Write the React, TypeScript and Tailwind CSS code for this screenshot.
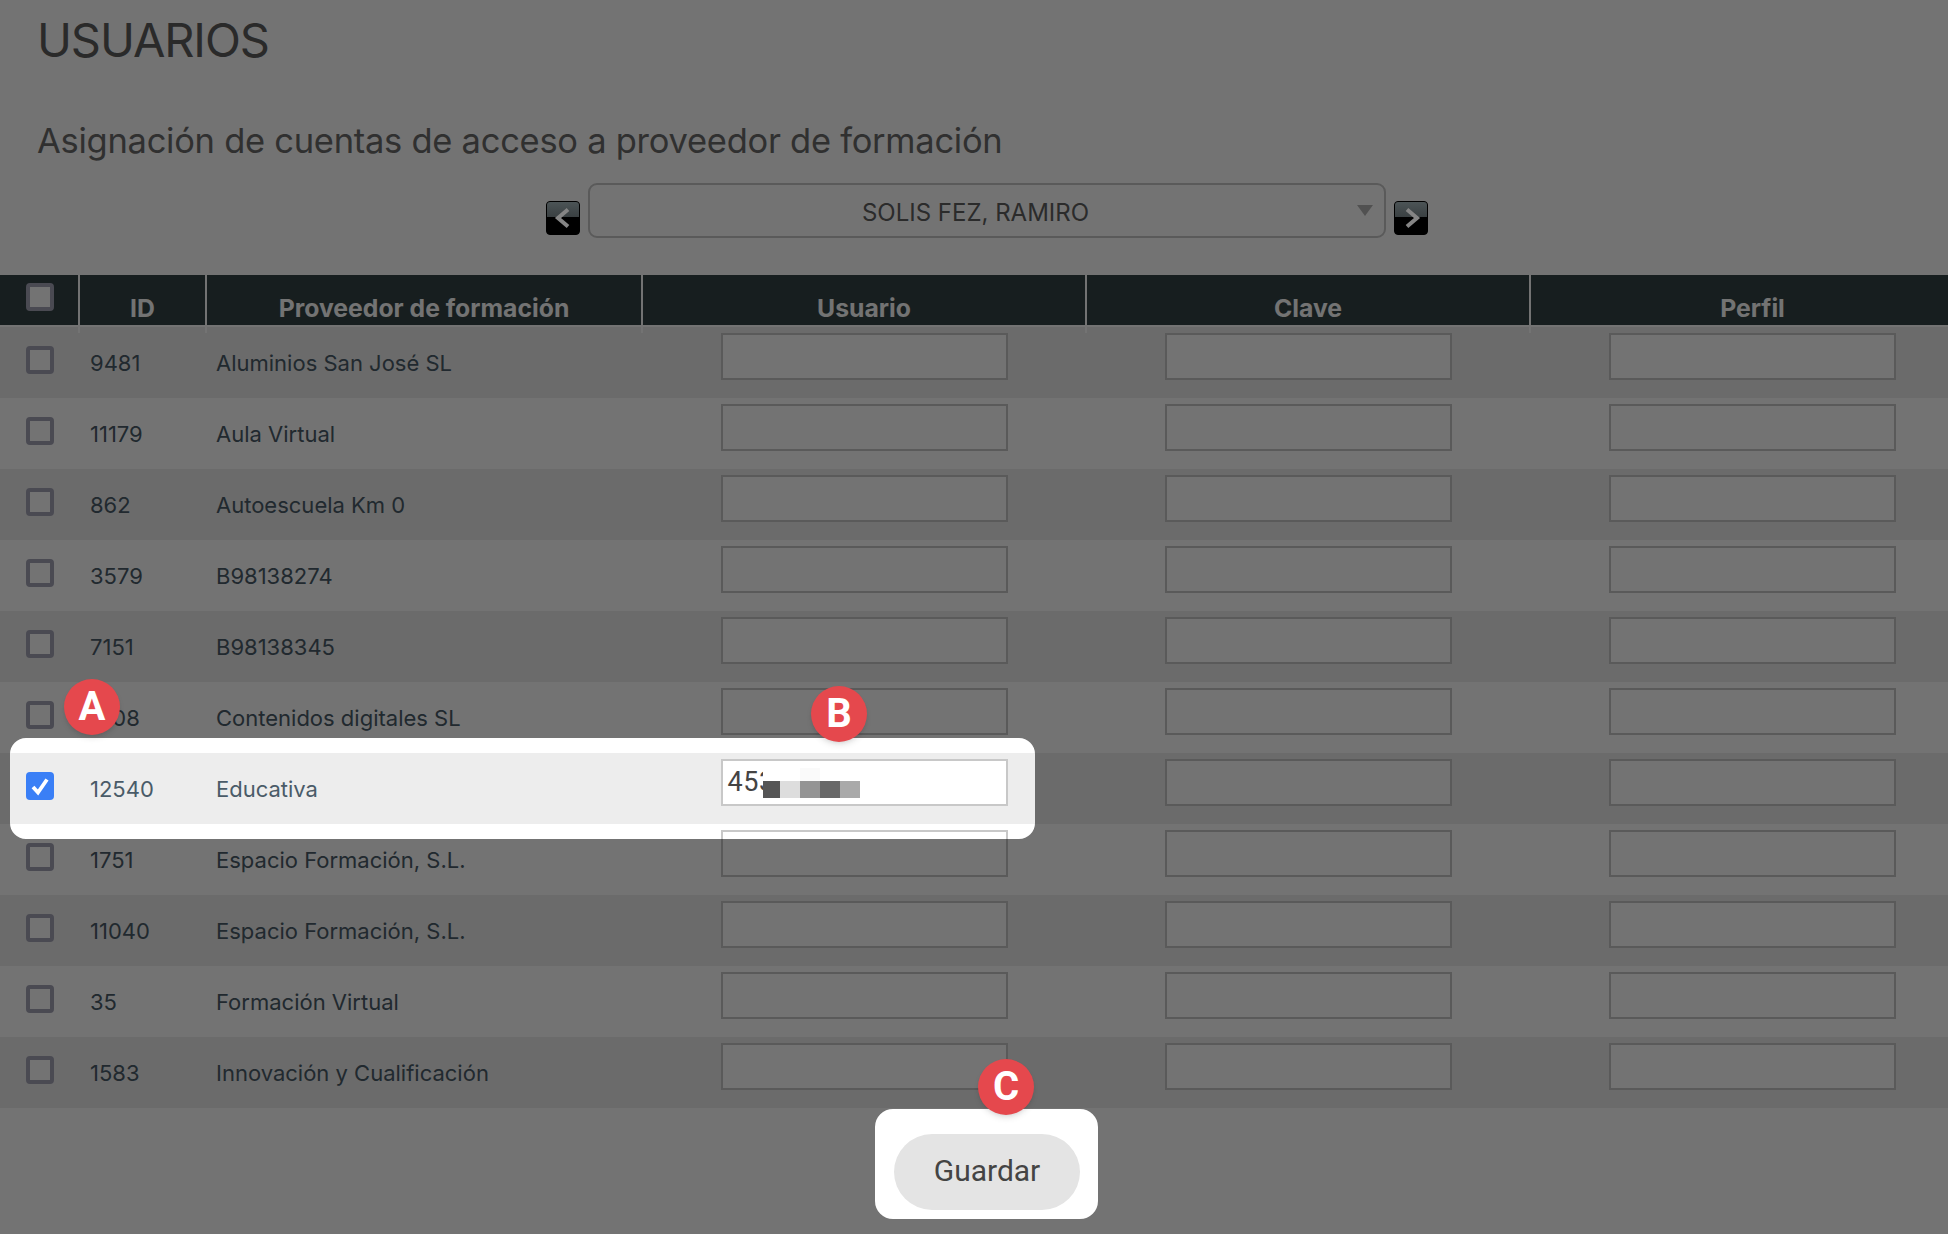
const rows: [string, string][] = [
  ["9481", "Aluminios San José SL"],
  ["11179", "Aula Virtual"],
  ["862", "Autoescuela Km 0"],
  ["3579", "B98138274"],
  ["7151", "B98138345"],
  ["5108", "Contenidos digitales SL"],
  ["12540", "Educativa"],
  ["1751", "Espacio Formación, S.L."],
  ["11040", "Espacio Formación, S.L."],
  ["35", "Formación Virtual"],
  ["1583", "Innovación y Cualificación"],
];

function Arrow({ dir }: { dir: "l" | "r" }) {
  return (
    <div className="relative z-10 w-[34px] h-[34px] rounded-[4px] overflow-hidden flex flex-col bg-black mb-[3px] border-[1.5px] border-black">
      <div className="h-[15px] bg-gradient-to-b from-[#4c5456] to-[#3a4042]" />
      <svg viewBox="0 0 34 34" className="absolute -inset-[1.5px] w-[34px] h-[34px]">
        <path
          d={dir === "l" ? "M22 8.5 L12 17 L22 25.5" : "M13 8.5 L23 17 L13 25.5"}
          fill="none"
          stroke="#858585"
          strokeWidth="4"
        />
      </svg>
    </div>
  );
}

function Badge({ letter, className }: { letter: string; className: string }) {
  return (
    <div
      className={`absolute w-[56px] h-[56px] rounded-full bg-[#e5484d] text-white flex items-center justify-center text-[40px] font-bold font-['Roboto',sans-serif] shadow-md ${className}`}
    >
      {letter}
    </div>
  );
}

export default function App() {
  return (
    <div className="relative w-[1948px] h-[1234px] overflow-hidden bg-white font-['Inter',sans-serif]">
      <h1 className="pt-[14px] pl-[37px] h-[119px] text-[47px] leading-[52px] font-normal text-[#5e5e5e] tracking-[-1.1px]">
        USUARIOS
      </h1>
      <h2 className="pl-[37px] h-[64px] text-[34.5px] leading-[44px] font-normal text-[#6c6c6c] tracking-[-0.27px]">
        Asignación de cuentas de acceso a proveedor de formación
      </h2>

      <div className="flex justify-center items-end gap-2 pl-[26px] h-[55px]">
        <Arrow dir="l" />
        <div className="w-[798px] h-[55px] border-2 border-[#c8c8c8] rounded-[9px] flex items-center text-[24px] text-[#5f5f5f] pr-[11px]">
          <span className="flex-1 text-center pl-[4px] pt-[5px]">SOLIS FEZ, RAMIRO</span>
          <svg viewBox="0 0 16 11" className="w-[16px] h-[11px]">
            <path d="M0 0 H16 L8 11 Z" fill="#b4b4b4" />
          </svg>
        </div>
        <Arrow dir="r" />
      </div>

      <div className="mt-[37px] w-[1948px] overflow-hidden">
        <div className="grid grid-cols-[80px_127px_436px_444px_444px_443px] w-[1974px] h-[52px] bg-[#334345] border-b-2 border-[#ffffff] text-white font-bold text-[24.75px] leading-[50px]">
          <div className="border-r-2 border-white pl-[26px] pt-[8px]">
            <div className="w-[28px] h-[28px] border-[4px] border-[#a4a4b6] bg-white rounded-[4px]" />
          </div>
          <div className="border-r-2 border-white text-center pt-[8px]">ID</div>
          <div className="border-r-2 border-white text-center pt-[8px]">Proveedor de formación</div>
          <div className="border-r-2 border-white text-center pt-[8px]">Usuario</div>
          <div className="border-r-2 border-white text-center pt-[8px]">Clave</div>
          <div className="text-center pt-[8px]">Perfil</div>
        </div>

        {rows.map(([id, name], i) => {
          const checked = id === "12540";
          return (
            <div
              key={id}
              className={`grid grid-cols-[80px_127px_435px_444px_444px_445px] w-[1975px] h-[71px] text-[22px] text-[#4a5b68] ${i % 2 === 0 ? "bg-[#ededed]" : "bg-white"}`}
            >
              <div className="pl-[26px] pt-[19px]">
                {checked ? (
                  <div className="w-[28px] h-[28px] bg-[#3a7ff6] rounded-[4px] flex items-center justify-center">
                    <svg viewBox="0 0 24 24" className="w-[24px] h-[24px]">
                      <path d="M5 13 L10 18.5 L19 5.5" fill="none" stroke="#ffffff" strokeWidth="3.8" />
                    </svg>
                  </div>
                ) : (
                  <div className="w-[28px] h-[28px] border-[4px] border-[#a4a4b6] bg-white rounded-[4px]" />
                )}
              </div>
              <div className="pl-[10px] leading-[71px] pt-[1px]">{id}</div>
              <div className="pl-[9px] leading-[71px] pt-[1px]">{name}</div>
              {[0, 1, 2].map((c) => (
                <div key={c} className="flex justify-center pt-[6px]">
                  <div className="relative w-[287px] h-[47px] border-2 border-[#c8c8c8] bg-white overflow-hidden">
                    {checked && c === 0 && (
                      <>
                        <span className="absolute left-[5px] top-[4px] font-['Roboto',sans-serif] text-[27px] leading-[34px] tracking-[0.6px] text-[#444444]">
                          453
                        </span>
                        <div className="absolute left-[40px] top-[7px] flex flex-col items-start">
                          <div className="flex h-[13px]">
                            <div className="w-[37px] bg-white" />
                            <div className="w-[20px] bg-[#fafafa]" />
                          </div>
                          <div className="flex h-[17px]">
                            <div className="w-[17px] bg-[#555555]" />
                            <div className="w-[20px] bg-[#dddddd]" />
                            <div className="w-[20px] bg-[#949494]" />
                            <div className="w-[20px] bg-[#686868]" />
                            <div className="w-[20px] bg-[#a9a9a9]" />
                          </div>
                        </div>
                      </>
                    )}
                  </div>
                </div>
              ))}
            </div>
          );
        })}
      </div>

      <div className="flex justify-center pl-[26px] pt-[26px]">
        <button className="w-[186px] h-[76px] rounded-[38px] bg-[#e4e4e4] text-[#444444] text-[30px] pb-[3px] font-['Roboto',sans-serif]">
          Guardar
        </button>
      </div>

      <div className="absolute inset-0 bg-black/55 [clip-path:path(evenodd,'M0_0H1948V1234H0ZM26_738H1019A16_16_0_0_1_1035_754V823A16_16_0_0_1_1019_839H26A16_16_0_0_1_10_823V754A16_16_0_0_1_26_738ZM893_1109H1080A18_18_0_0_1_1098_1127V1201A18_18_0_0_1_1080_1219H893A18_18_0_0_1_875_1201V1127A18_18_0_0_1_893_1109Z')]" />

      <Badge letter="A" className="left-[64px] top-[679px]" />
      <Badge letter="B" className="left-[811px] top-[686px]" />
      <Badge letter="C" className="left-[978px] top-[1059px]" />
    </div>
  );
}
